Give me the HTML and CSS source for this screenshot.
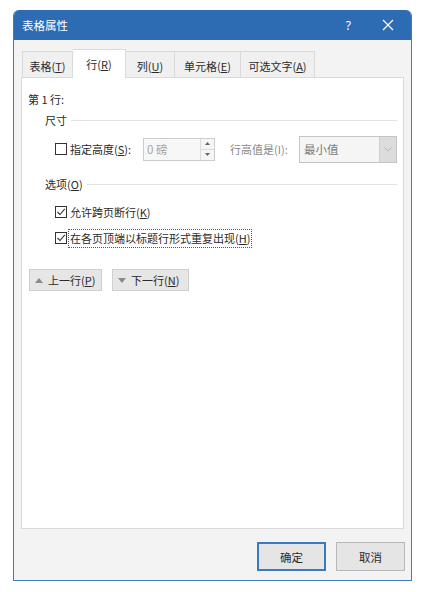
FILE: index.html
```html
<!DOCTYPE html>
<html lang="zh-CN">
<head>
<meta charset="utf-8">
<title>表格属性</title>
<link rel="stylesheet" href="styles.css">
</head>
<body>
<div class="dialog">
  <div class="titlebar">
    <span class="title">表格属性</span>
    <span class="help">?</span>
    <span class="close"><svg width="12" height="12" viewBox="0 0 12 12"><path d="M1 1 L11 11 M11 1 L1 11" stroke="#fff" stroke-width="1.2" fill="none"/></svg></span>
  </div>
  <div class="body">
    <div class="tabs">
      <div class="tab w1">表格(<u>T</u>)</div>
      <div class="tab active w2">行(<u>R</u>)</div>
      <div class="tab w3">列(<u>U</u>)</div>
      <div class="tab w4">单元格(<u>E</u>)</div>
      <div class="tab w5">可选文字(<u>A</u>)</div>
    </div>
    <div class="panel">
      <div class="rowlabel">第 1 行:</div>
      <div class="group"><span>尺寸</span><span class="rule"></span></div>
      <div class="size-row">
        <div class="check"><span class="box"></span><span class="lbl-s">指定高度(<u>S</u>):</span></div>
        <div class="spin">
          <span class="val">0 磅</span>
          <span class="spinbtns">
            <span class="sb"><svg width="5" height="3" viewBox="0 0 5 3"><path d="M0 3 L2.5 0 L5 3Z" fill="#666"/></svg></span>
            <span class="sb"><svg width="5" height="3" viewBox="0 0 5 3"><path d="M0 0 L2.5 3 L5 0Z" fill="#666"/></svg></span>
          </span>
        </div>
        <span class="dis-label">行高值是(I):</span>
        <div class="combo">
          <span class="cval">最小值</span>
          <span class="drop"><svg width="8" height="5" viewBox="0 0 8 5"><path d="M0.5 0.5 L4 4 L7.5 0.5" stroke="#b8b8b8" stroke-width="1" fill="none"/></svg></span>
        </div>
      </div>
      <div class="group g2"><span>选项(<u>O</u>)</span><span class="rule"></span></div>
      <div class="check opt1"><span class="box"><svg width="10" height="10" viewBox="0 0 10 10"><path d="M1.5 5 L4 7.5 L8.8 1.8" stroke="#333" stroke-width="1.1" fill="none"/></svg></span><span>允许跨页断行(<u>K</u>)</span></div>
      <div class="check opt2"><span class="box"><svg width="10" height="10" viewBox="0 0 10 10"><path d="M1.5 5 L4 7.5 L8.8 1.8" stroke="#333" stroke-width="1.1" fill="none"/></svg></span><span class="focus">在各页顶端以标题行形式重复出现(<u>H</u>)</span></div>
      <div class="navbtns">
        <div class="nbtn n1"><svg width="8" height="5" viewBox="0 0 8 5"><path d="M0 5 L4 0 L8 5Z" fill="#8a8a8a"/></svg><span>上一行(<u>P</u>)</span></div>
        <div class="nbtn n2"><svg width="8" height="5" viewBox="0 0 8 5"><path d="M0 0 L4 5 L8 0Z" fill="#8a8a8a"/></svg><span>下一行(<u>N</u>)</span></div>
      </div>
    </div>
    <div class="footer">
      <div class="btn primary">确定</div>
      <div class="btn">取消</div>
    </div>
  </div>
</div>
</body>
</html>
```
FILE: styles.css
```css
* { box-sizing: border-box; }
html, body { margin: 0; padding: 0; background: #ffffff; }
body {
  font-family: "Noto Sans CJK SC", "Noto Sans", sans-serif;
  font-size: 11px;
  color: #2a2a2a;
  white-space: nowrap;
}
u { text-decoration: underline; text-underline-offset: 1px; }

.dialog {
  margin: 10px 0 0 13px;
  width: 399px;
  height: 571px;
  border: 1px solid #3f7cc4;
  border-top: none;
  border-radius: 6px 6px 0 0;
  display: flex;
  flex-direction: column;
  overflow: hidden;
}

.titlebar {
  height: 30px;
  background: #2d6cb3;
  color: #ffffff;
  display: flex;
  align-items: center;
  padding-left: 8px;
  flex-shrink: 0;
}
.title { font-size: 11.5px; flex: 1; }
.help { font-family: "Noto Sans", sans-serif; font-size: 12px; margin-right: 31px; }
.close { display: flex; margin-right: 17px; }

.body {
  flex: 1;
  background: #f3f3f3;
  padding: 11px 7px 10px 7px;
  display: flex;
  flex-direction: column;
}

.tabs {
  display: flex;
  align-items: flex-end;
  height: 26px;
  padding-left: 1px;
  position: relative;
  z-index: 1;
}
.tab {
  height: 26px;
  border: 1px solid #dadada;
  border-bottom: none;
  border-left: none;
  background: #f0f0f0;
  display: flex;
  align-items: center;
  justify-content: center;
  padding-top: 2px;
}
.tab.w1 { width: 51px; border-left: 1px solid #dadada; }
.tab.w2 { width: 53px; }
.tab.w3 { width: 49px; }
.tab.w4 { width: 66px; }
.tab.w5 { width: 74px; }
.tab.active {
  background: #ffffff;
  height: 29px;
  margin-bottom: -1px;
  padding-top: 0;
}

.panel {
  height: 452px;
  background: #ffffff;
  border: 1px solid #dadada;
  padding: 13px 6px 0 6px;
  display: flex;
  flex-direction: column;
}

.rowlabel { height: 16px; line-height: 16px; }

.group {
  display: flex;
  align-items: center;
  height: 16px;
  margin: 5px 0 0 17px;
  gap: 4px;
}
.group.g2 { margin-top: 13px; }
.rule { flex: 1; height: 1px; background: #e2e2e2; }

.size-row {
  display: flex;
  align-items: center;
  height: 28px;
  margin: 7px 0 0 27px;
}
.check { display: flex; align-items: center; gap: 3px; height: 20px; }
.lbl-s { width: 73px; }
.box {
  width: 12px;
  height: 12px;
  border: 1px solid #333333;
  background: #ffffff;
  display: flex;
  align-items: center;
  justify-content: center;
  flex-shrink: 0;
}
.spin {
  width: 72px;
  height: 23px;
  border: 1px solid #cccccc;
  background: #f7f7f7;
  display: flex;
}
.val { flex: 1; color: #a3a3a3; padding-left: 3px; line-height: 21px; font-size: 11.5px; }
.spinbtns {
  width: 14px;
  display: flex;
  flex-direction: column;
  border-left: 1px solid #dcdcdc;
  background: #f5f5f5;
}
.sb { flex: 1; display: flex; align-items: center; justify-content: center; }
.sb + .sb { border-top: 1px solid #dcdcdc; }
.dis-label { margin-left: 15px; width: 69px; color: #8a8a8a; }
.combo {
  width: 98px;
  height: 27px;
  border: 1px solid #c4c4c4;
  background: #f5f5f5;
  display: flex;
}
.cval { flex: 1; color: #7a7a7a; padding-left: 4px; line-height: 25px; font-size: 11.5px; }
.drop {
  width: 17px;
  background: #dcdcdc;
  border-left: 1px solid #cfcfcf;
  display: flex;
  align-items: center;
  justify-content: center;
}

.opt1 { margin: 10px 0 0 27px; }
.opt2 { margin: 6px 0 0 27px; gap: 1px; }
.focus {
  border: 1px dotted #555555;
  padding: 0 1px;
  line-height: 17px;
}

.navbtns {
  display: flex;
  gap: 10px;
  margin: 21px 0 0 1px;
}
.nbtn {
  height: 22px;
  border: 1px solid #cfcfcf;
  background: #e6e6e6;
  display: flex;
  align-items: center;
  gap: 5px;
  padding-left: 5px;
}
.nbtn.n1 { width: 73px; }
.nbtn.n2 { width: 77px; }

.footer {
  display: flex;
  justify-content: flex-end;
  gap: 10px;
  margin-top: 13px;
  margin-right: -1px;
}
.btn {
  width: 69px;
  height: 29px;
  border: 1px solid #b8b8b8;
  background: #e5e5e5;
  display: flex;
  align-items: center;
  justify-content: center;
  font-size: 11.5px;
}
.btn.primary { border: 2px solid #3d78c2; }
```
